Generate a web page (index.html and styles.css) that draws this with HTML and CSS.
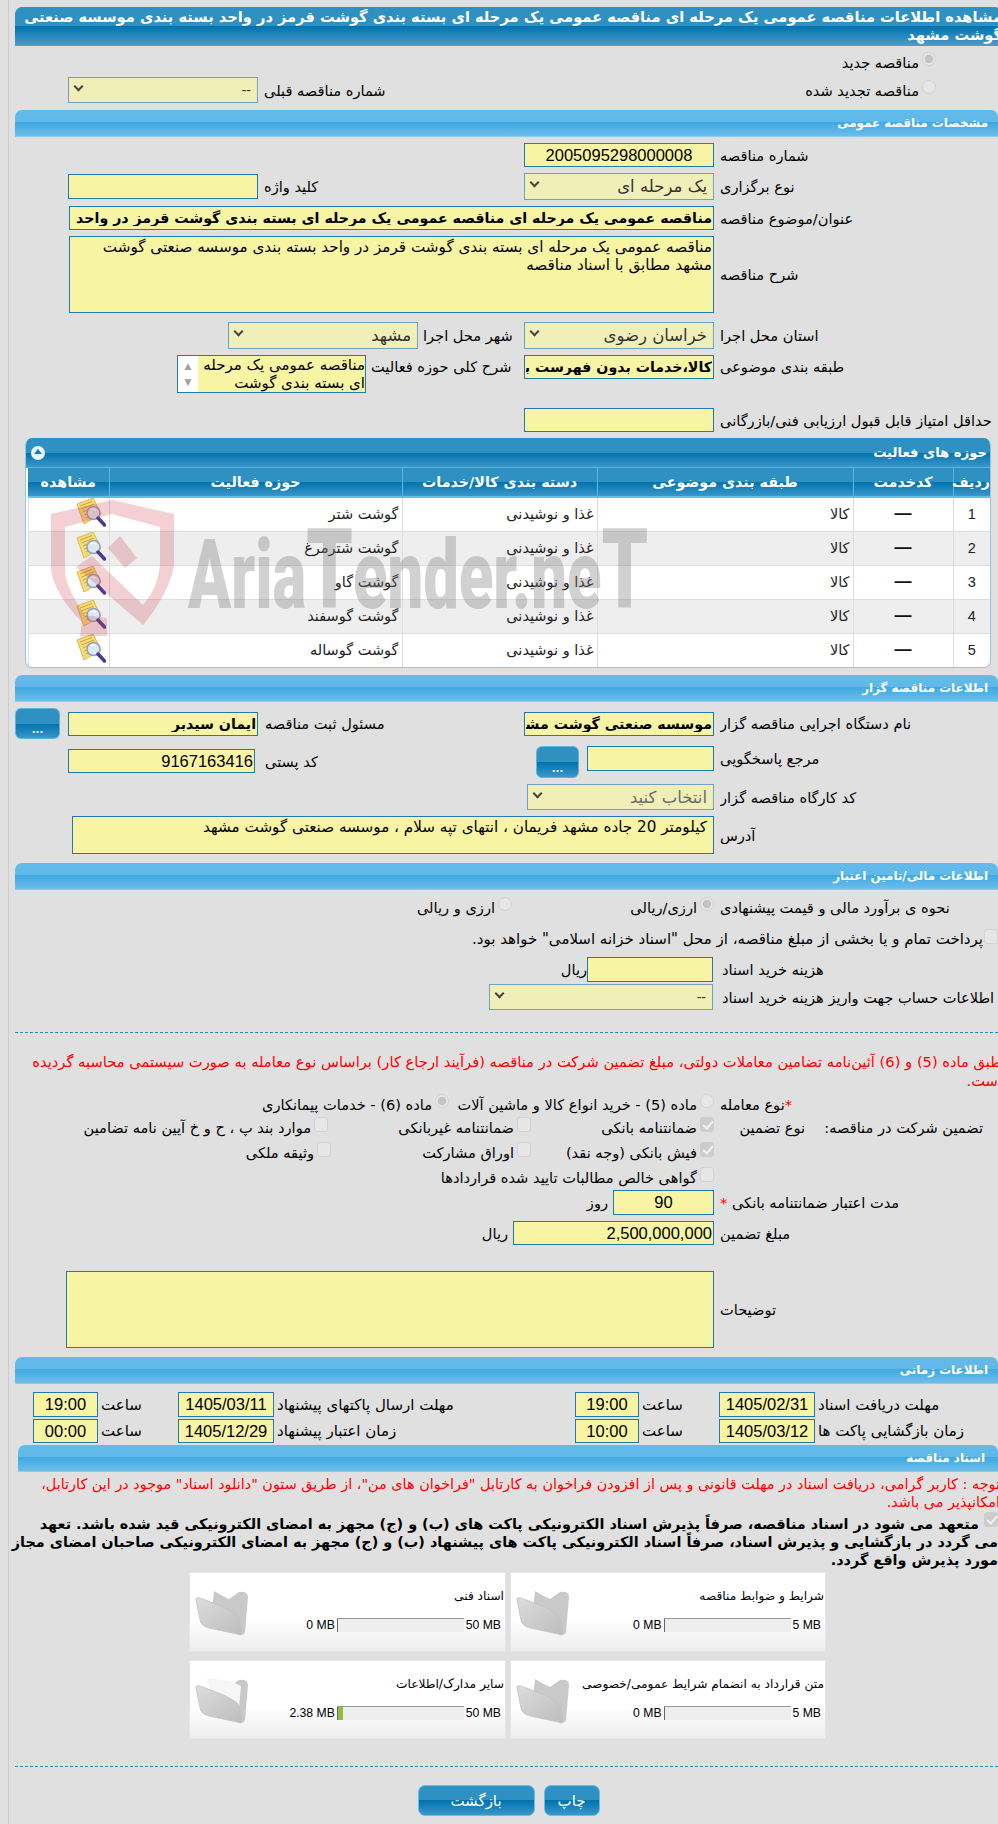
FILE: index.html
```html
<!DOCTYPE html>
<html lang="fa">
<head>
<meta charset="utf-8">
<title>مشاهده اطلاعات مناقصه</title>
<link rel="stylesheet" href="styles.css">
</head>
<body>
<svg class="defs" width="0" height="0" aria-hidden="true">
  <defs>
    <linearGradient id="fg" x1="0" y1="0" x2="1" y2="1"><stop offset="0" stop-color="#dcdcdc"/><stop offset="1" stop-color="#bdbdbd"/></linearGradient>
    <symbol id="note" viewBox="0 0 30 30">
      <path d="M1 6 L17 0 L25 16 L8 26 Z" fill="#f4dc78" stroke="#d8b850" stroke-width="1"/>
      <path d="M4 8 L16 3.500 M5.500 11 L18 6 M7 14 L19 9 M8.500 17 L14 14.500 M10 20 L14 18" stroke="#c9a63c" stroke-width="1" fill="none"/>
      <circle cx="17.500" cy="15" r="6.500" fill="#dce8f4" stroke="#9aa0b8" stroke-width="1.500"/>
      <path d="M15 12 Q17 10.500 20 12" stroke="#fff" stroke-width="1.500" fill="none"/>
      <path d="M22 20 L28.500 27" stroke="#4d3a94" stroke-width="3.500" stroke-linecap="round"/>
    </symbol>
    <symbol id="folder" viewBox="0 0 54 46">
      <path d="M19 1 Q27 6 34 9 L44 2 Q53 1 53 7 L50 42 Q49 46 44 44 L16 30 Z" fill="#c9c9c9"/>
      <path d="M1 10 Q0 7 5 8 L21 14 Q25 16 29 17 L41 24 Q44 26 45 32 L47 44 Q46 46 42 44 L14 38 Q6 36 5 30 Z" fill="url(#fg)" stroke="#c2c2c2" stroke-width=".8"/>
    </symbol>
    <symbol id="folder-full" viewBox="0 0 54 46">
      <path d="M19 1 Q27 6 34 9 L44 2 Q53 1 53 7 L50 42 Q49 46 44 44 L16 30 Z" fill="#c9c9c9"/>
      <path d="M12 0 L36 3 L46 8 L44 30 L20 24 Z" fill="#f6f6f6"/>
      <path d="M1 10 Q0 7 5 8 L21 14 Q25 16 29 17 L41 24 Q44 26 45 32 L47 44 Q46 46 42 44 L14 38 Q6 36 5 30 Z" fill="url(#fg)" stroke="#c2c2c2" stroke-width=".8"/>
    </symbol>
  </defs>
</svg>

<div class="shell">
<main class="main" dir="rtl">

  <h1 class="head">مشاهده اطلاعات مناقصه عمومی یک مرحله ای مناقصه عمومی یک مرحله ای بسته بندی گوشت قرمز در واحد بسته بندی موسسه صنعتی گوشت مشهد</h1>

  <div class="radio-row rr-1"><input class="rd" type="radio" disabled checked><span>مناقصه جدید</span></div>
  <div class="row rr-2">
    <div class="radio-inline"><input class="rd" type="radio" disabled><span>مناقصه تجدید شده</span></div>
    <div class="aside">
      <span>شماره مناقصه قبلی</span>
      <div class="sel w190 h26"><select disabled class="dash-val"><option>--</option></select></div>
    </div>
  </div>

  <h2 class="bar mt-7">مشخصات مناقصه عمومی</h2>

  <div class="row mt-6">
    <label class="lab">شماره مناقصه</label>
    <input class="fld num w190 center" readonly value="2005095298000008">
  </div>
  <div class="row mt-6">
    <label class="lab">نوع برگزاری</label>
    <div class="sel w190 h27"><select disabled><option>یک مرحله ای</option></select></div>
    <div class="aside">
      <span>کلید واژه</span>
      <input class="fld w190 h25" readonly value="">
    </div>
  </div>
  <div class="row mt-6">
    <label class="lab">عنوان/موضوع مناقصه</label>
    <input class="fld bold w645" readonly value="مناقصه عمومی یک مرحله ای مناقصه عمومی یک مرحله ای بسته بندی گوشت قرمز در واحد بسته بندی موسسه صنعتی گوشت مشهد">
  </div>
  <div class="row mt-6">
    <label class="lab">شرح مناقصه</label>
    <textarea class="area w645 h77" readonly>مناقصه عمومی یک مرحله ای بسته بندی گوشت قرمز در واحد بسته بندی موسسه صنعتی گوشت مشهد مطابق با اسناد مناقصه</textarea>
  </div>
  <div class="row mt-9">
    <label class="lab">استان محل اجرا</label>
    <div class="sel w190 h27"><select disabled><option>خراسان رضوی</option></select></div>
    <div class="near">
      <span class="near-lab nl-101">شهر محل اجرا</span>
      <div class="sel w190 h27"><select disabled><option>مشهد</option></select></div>
    </div>
  </div>
  <div class="row row-top mt-6">
    <label class="lab lh24">طبقه بندی موضوعی</label>
    <input class="fld bold w190" readonly value="کالا،خدمات بدون فهرست بها">
    <div class="near">
      <span class="near-lab nl-153 lh24">شرح کلی حوزه فعالیت</span>
      <div class="listbox">
        <div class="list-text">مناقصه عمومی یک مرحله ای بسته بندی گوشت</div>
        <div class="list-bar"><span>▲</span><span>▼</span></div>
      </div>
    </div>
  </div>
  <div class="row mt-15">
    <label class="lab">حداقل امتیاز قابل قبول ارزیابی فنی/بازرگانی</label>
    <input class="fld w190 shift-4" readonly value="">
  </div>

  <section class="panel">
    <div class="panel-title"><span>حوزه های فعالیت</span><span class="collapse"></span></div>
    <div class="panel-body">
      <table class="grid">
        <colgroup><col class="c1"><col class="c2"><col class="c3"><col class="c4"><col class="c5"><col class="c6"></colgroup>
        <thead>
          <tr><th>ردیف</th><th>کدخدمت</th><th>طبقه بندی موضوعی</th><th>دسته بندی کالا/خدمات</th><th>حوزه فعالیت</th><th>مشاهده</th></tr>
        </thead>
        <tbody>
          <tr><td class="ctr">1</td><td class="ctr dash">—</td><td>کالا</td><td>غذا و نوشیدنی</td><td>گوشت شتر</td><td class="ico"><svg class="note"><use href="#note"/></svg></td></tr>
          <tr><td class="ctr">2</td><td class="ctr dash">—</td><td>کالا</td><td>غذا و نوشیدنی</td><td>گوشت شترمرغ</td><td class="ico"><svg class="note"><use href="#note"/></svg></td></tr>
          <tr><td class="ctr">3</td><td class="ctr dash">—</td><td>کالا</td><td>غذا و نوشیدنی</td><td>گوشت گاو</td><td class="ico"><svg class="note"><use href="#note"/></svg></td></tr>
          <tr><td class="ctr">4</td><td class="ctr dash">—</td><td>کالا</td><td>غذا و نوشیدنی</td><td>گوشت گوسفند</td><td class="ico"><svg class="note"><use href="#note"/></svg></td></tr>
          <tr><td class="ctr">5</td><td class="ctr dash">—</td><td>کالا</td><td>غذا و نوشیدنی</td><td>گوشت گوساله</td><td class="ico"><svg class="note"><use href="#note"/></svg></td></tr>
        </tbody>
      </table>
    </div>
  </section>

  <h2 class="bar mt-7">اطلاعات مناقصه گزار</h2>

  <div class="row mt-6">
    <label class="lab">نام دستگاه اجرایی مناقصه گزار</label>
    <input class="fld bold w190" readonly value="موسسه صنعتی گوشت مشهد">
    <div class="aside edge">
      <span>مسئول ثبت مناقصه</span>
      <input class="fld bold w190" readonly value="ایمان سیدبر">
      <button class="dots" type="button">...</button>
    </div>
  </div>
  <div class="row row-top mt-7">
    <label class="lab lh25">مرجع پاسخگویی</label>
    <input class="fld w127 h25" readonly value="">
    <button class="dots dots-gap" type="button">...</button>
    <div class="aside drop-3">
      <span>کد پستی</span>
      <input class="fld num w187" readonly value="9167163416">
    </div>
  </div>
  <div class="row mt-6">
    <label class="lab">کد کارگاه مناقصه گزار</label>
    <div class="sel w187 h26"><select disabled class="muted"><option>انتخاب کنید</option></select></div>
  </div>
  <div class="row mt-6">
    <label class="lab">آدرس</label>
    <textarea class="area w642 h38 pad-r6" readonly>کیلومتر 20 جاده مشهد فریمان ، انتهای تپه سلام ، موسسه صنعتی گوشت مشهد</textarea>
  </div>

  <h2 class="bar mt-9">اطلاعات مالی/تامین اعتبار</h2>

  <div class="row opt-row mt-6">
    <label class="lab">نحوه ی برآورد مالی و قیمت پیشنهادی</label>
    <div class="radio-inline w202"><input class="rd" type="radio" disabled checked><span>ارزی/ریالی</span></div>
    <div class="radio-inline"><input class="rd" type="radio" disabled><span>ارزی و ریالی</span></div>
  </div>
  <div class="row opt-row mt-10 treasury">
    <input class="cb" type="checkbox" disabled><span>پرداخت تمام و یا بخشی از مبلغ مناقصه، از محل "اسناد خزانه اسلامی" خواهد بود.</span>
  </div>
  <div class="row mt-7">
    <label class="lab lab-w">هزینه خرید اسناد</label>
    <input class="fld w126 h25" readonly value="">
    <span class="tail-0">ریال</span>
  </div>
  <div class="row mt-2">
    <label class="lab lab-w">اطلاعات حساب جهت واریز هزینه خرید اسناد</label>
    <div class="sel w224 h26"><select disabled class="dash-val"><option>--</option></select></div>
  </div>

  <hr class="dotted mt-22">

  <p class="warn">طبق ماده (5) و (6) آئین‌نامه تضامین معاملات دولتی، مبلغ تضمین شرکت در مناقصه (فرآیند ارجاع کار) براساس نوع معامله به صورت سیستمی محاسبه گردیده است.</p>

  <div class="row opt-row mt-1">
    <label class="lab"><span class="star">*</span>نوع معامله</label>
    <div class="radio-inline w266"><input class="rd" type="radio" disabled><span>ماده (5) - خرید انواع کالا و ماشین آلات</span></div>
    <div class="radio-inline"><input class="rd" type="radio" disabled checked><span>ماده (6) - خدمات پیمانکاری</span></div>
  </div>

  <div class="row g-row">
    <span class="g-a">تضمین شرکت در مناقصه:</span><span class="g-b">نوع تضمین</span>
    <div class="radio-inline w183"><input class="cb" type="checkbox" disabled checked><span>ضمانتنامه بانکی</span></div>
    <div class="radio-inline w203"><input class="cb" type="checkbox" disabled><span>ضمانتنامه غیربانکی</span></div>
    <div class="radio-inline"><input class="cb" type="checkbox" disabled><span>موارد بند پ ، ح و خ آیین نامه تضامین</span></div>
  </div>
  <div class="row g-row">
    <span class="g-blank"></span>
    <div class="radio-inline w183"><input class="cb" type="checkbox" disabled checked><span>فیش بانکی (وجه نقد)</span></div>
    <div class="radio-inline w200"><input class="cb" type="checkbox" disabled><span>اوراق مشارکت</span></div>
    <div class="radio-inline"><input class="cb" type="checkbox" disabled><span>وثیقه ملکی</span></div>
  </div>
  <div class="row g-row">
    <span class="g-blank"></span>
    <div class="radio-inline"><input class="cb" type="checkbox" disabled><span>گواهی خالص مطالبات تایید شده قراردادها</span></div>
  </div>

  <div class="row">
    <label class="lab">مدت اعتبار ضمانتنامه بانکی <span class="star">*</span></label>
    <input class="fld num center w101 h25" readonly value="90">
    <span class="tail">روز</span>
  </div>
  <div class="row mt-6">
    <label class="lab">مبلغ تضمین</label>
    <input class="fld num w201" readonly value="2,500,000,000">
    <span class="tail">ریال</span>
  </div>
  <div class="row mt-26">
    <label class="lab">توضیحات</label>
    <textarea class="area w648 h77" readonly></textarea>
  </div>

  <h2 class="bar mt-9">اطلاعات زمانی</h2>

  <div class="times">
    <span class="t-lab">مهلت دریافت اسناد</span><input class="fld num center h25" readonly value="1405/02/31"><span class="t-hour">ساعت</span><input class="fld num center h25" readonly value="19:00">
    <span class="t-lab">مهلت ارسال پاکتهای پیشنهاد</span><input class="fld num center h25" readonly value="1405/03/11"><span class="t-hour">ساعت</span><input class="fld num center h25" readonly value="19:00">
    <span class="t-lab">زمان بازگشایی پاکت ها</span><input class="fld num center" readonly value="1405/03/12"><span class="t-hour">ساعت</span><input class="fld num center" readonly value="10:00">
    <span class="t-lab">زمان اعتبار پیشنهاد</span><input class="fld num center" readonly value="1405/12/29"><span class="t-hour">ساعت</span><input class="fld num center" readonly value="00:00">
  </div>

  <h2 class="bar bar-docs mt-2">اسناد مناقصه</h2>

  <p class="notice">توجه : کاربر گرامی، دریافت اسناد در مهلت قانونی و پس از افزودن فراخوان به کارتابل "فراخوان های من"، از طریق ستون "دانلود اسناد" موجود در این کارتابل، امکانپذیر می باشد.</p>

  <p class="pledge"><input class="cb cb-pledge" type="checkbox" disabled checked>متعهد می شود در اسناد مناقصه، صرفاً پذیرش اسناد الکترونیکی پاکت های (ب) و (ج) مجهز به امضای الکترونیکی قید شده باشد. تعهد<br>می گردد در بازگشایی و پذیرش اسناد، صرفاً اسناد الکترونیکی پاکت های پیشنهاد (ب) و (ج) مجهز به امضای الکترونیکی صاحبان امضای مجاز<br>مورد پذیرش واقع گردد.</p>

  <div class="docs">
    <article class="card">
      <div class="card-info">
        <div class="card-title">شرایط و ضوابط مناقصه</div>
        <div class="meter"><span class="mb">5 MB</span><div class="track"></div><span class="mb">0 MB</span></div>
      </div>
      <svg class="folder"><use href="#folder"/></svg>
    </article>
    <article class="card">
      <div class="card-info">
        <div class="card-title">اسناد فنی</div>
        <div class="meter"><span class="mb">50 MB</span><div class="track"></div><span class="mb">0 MB</span></div>
      </div>
      <svg class="folder"><use href="#folder"/></svg>
    </article>
    <article class="card">
      <div class="card-info">
        <div class="card-title">متن قرارداد به انضمام شرایط عمومی/خصوصی</div>
        <div class="meter"><span class="mb">5 MB</span><div class="track"></div><span class="mb">0 MB</span></div>
      </div>
      <svg class="folder"><use href="#folder"/></svg>
    </article>
    <article class="card">
      <div class="card-info">
        <div class="card-title">سایر مدارک/اطلاعات</div>
        <div class="meter"><span class="mb">50 MB</span><div class="track"><div class="fill" style="width:5%"></div></div><span class="mb">2.38 MB</span></div>
      </div>
      <svg class="folder"><use href="#folder-full"/></svg>
    </article>
  </div>

  <hr class="dotted mt-27">

  <div class="actions">
    <button class="act act-print" type="button">چاپ</button>
    <button class="act act-back" type="button">بازگشت</button>
  </div>
</main>
</div>

<div class="watermark" aria-hidden="true">
  <svg class="shield" viewBox="0 0 130 140">
    <path d="M62 0 L124 14 L124 65 Q120 92 93 125 L26 67 L42 56 L93 105 Q110 85 110 60 L110 27 L62 14 L15 27 L15 75 Q20 95 35 115 L57 118 L57 136 L30 136 L32 122 Q5 95 1 70 L1 14 Z" fill="#c83c46" fill-opacity=".24"/>
    <path d="M58 48 L70 36 L87 58 L75 68 Z" fill="#c83c46" fill-opacity=".24"/>
  </svg>
  <span class="wm-text">Aria<span class="wm-t">T</span>ender.ne<span class="wm-t">T</span></span>
</div>
</body>
</html>
```
FILE: styles.css
```css
* { box-sizing: border-box; }
html, body { margin: 0; padding: 0; height: 1824px; overflow: hidden; }
body {
  background: #e0e0e0;
  color: #000;
  font-family: "DejaVu Sans", "Liberation Sans", sans-serif;
  font-size: 14.600px;
  position: relative;
}
.defs { position: absolute; }
.shell { margin-left: 8px; border-left: 1px solid #ccc; padding-left: 6px; width: 1002px; height: 1824px; padding-top: 7px; }
.main { width: 987px; }

.head {
  margin: 0;
  height: 39px;
  font-size: 14.650px;
  font-weight: bold;
  line-height: 18px;
  color: #fff;
  padding: 1px 0 0 5px;
  border-radius: 7px 7px 0 0;
  background: linear-gradient(#2f90c2 0, #2f90c2 50%, #0072ae 50%, #4a9bc9 100%);
  border-bottom: 1px solid #4a9fd2;
  overflow: hidden;
}
.bar {
  margin: 0 0 0 0;
  margin-right: 4px;
  height: 27px;
  line-height: 27px;
  font-size: 11.900px;
  font-weight: bold;
  color: #fff;
  padding-right: 10px;
  border-radius: 7px 7px 0 0;
  background: linear-gradient(#63bbea 0, #5fb8e9 48%, #3ea9e3 48%, #6dbde9 100%);
  border-bottom: 1px solid #8ccdee;
}
.bar-docs { margin-left: 3px; padding-right: 13px; }

.mt-1 { margin-top: 1px; } .mt-2 { margin-top: 2px; } .mt-6 { margin-top: 6px; } .mt-7 { margin-top: 7px; }
.mt-9 { margin-top: 9px; } .mt-10 { margin-top: 10px; } .mt-15 { margin-top: 15px; } .mt-19 { margin-top: 19px; }
.mt-22 { margin-top: 22px; } .mt-26 { margin-top: 26px; } .mt-27 { margin-top: 27px; }

.row { display: flex; align-items: center; white-space: nowrap; }
.row-top { align-items: flex-start; }
.lab { flex: none; width: 282px; margin-left: 6px; text-align: left; white-space: nowrap; overflow: hidden; }
.lab-w { width: 280px; margin-left: 9px; }
.lh24 { line-height: 24px; }
.lh25 { line-height: 25px; }
.aside { margin-right: auto; margin-left: 53px; display: flex; align-items: center; gap: 6px; }
.aside.edge { margin-left: 0; gap: 7px; }
.aside.edge .dots { margin-right: 1px; }
.drop-3 { margin-top: 3px; gap: 10px; }
.near { display: flex; align-items: center; gap: 5px; }
.row-top .near { align-items: flex-start; }
.near-lab { flex: none; text-align: left; }
.nl-101 { width: 101px; }
.nl-153 { width: 153px; }
.shift-4 { margin-right: 4px; }

.radio-row { display: flex; align-items: center; padding-right: 66px; }
.rr-1 { margin-top: 5px; height: 22px; }
.rr-2 { margin-top: 4px; height: 26px; padding-right: 66px; }
.radio-inline { display: flex; align-items: center; flex: none; }
.radio-row span, .radio-inline span { margin-right: 3px; }
.w183 { width: 183px; } .w200 { width: 200px; } .w202 { width: 202px; } .w203 { width: 203px; } .w266 { width: 265px; }

.rd, .cb {
  appearance: none;
  -webkit-appearance: none;
  flex: none;
  margin: -6px 0 0 0;
  width: 14px;
  height: 14px;
  background: #e6e6e6;
  border: 1px solid #d2d2d2;
  position: relative;
}
.rd { border-radius: 50%; }
.rd:checked { background: radial-gradient(circle, #c3c3c3 0, #c3c3c3 4px, #e6e6e6 4.500px); }
.cb { border-radius: 3px; height: 15px; }
.cb:checked { background: #cdcdcd; border-color: #cdcdcd; }
.cb:checked::after {
  content: "";
  position: absolute;
  left: 4px; top: 1px;
  width: 4px; height: 8px;
  border: solid #f2f2f2;
  border-width: 0 2px 2px 0;
  transform: rotate(40deg);
}

.fld {
  flex: none;
  display: block;
  height: 24px;
  margin: 0;
  padding: 0 1px;
  border: 1px solid #1f7ab2;
  background: #f7f4a4;
  color: #000;
  font: inherit;
  font-size: 14px;
  text-align: right;
  outline: none;
}
.num { font-family: "Liberation Sans", sans-serif; font-size: 16.500px; }
.bold { font-weight: bold; font-size: 14.200px; }
.center { text-align: center; }
.w101 { width: 101px; } .w126 { width: 126px; } .w127 { width: 127px; } .w187 { width: 187px; } .w190 { width: 190px; }
.w201 { width: 201px; } .w224 { width: 224px; } .w642 { width: 642px; } .w645 { width: 645px; } .w648 { width: 648px; }
.h25 { height: 25px; } .h26 { height: 26px; } .h27 { height: 27px; } .h38 { height: 38px; } .h77 { height: 77px; }

.area {
  flex: none;
  display: block;
  margin: 0;
  padding: 1px 1px 0 1px;
  border: 1px solid #1f7ab2;
  background: #f7f4a4;
  font: inherit;
  font-size: 15.200px;
  line-height: 18px;
  resize: none;
  overflow: hidden;
  color: #000;
  outline: none;
}
.pad-r6 { padding-right: 6px; }

.sel { flex: none; position: relative; }
.sel select {
  appearance: none;
  -webkit-appearance: none;
  display: block;
  width: 100%;
  height: 100%;
  margin: 0;
  padding: 0 6px 0 20px;
  border: 1px solid #6ea3c6;
  border-radius: 0;
  background: #f1efb8;
  color: #333;
  opacity: 1;
  font: inherit;
  font-size: 16.500px;
  text-align: right;
}
.sel select.muted { color: #6b6b6b; }
.sel select.dash-val { font-family: "Liberation Sans", sans-serif; font-size: 14px; }
.sel::after {
  content: "";
  position: absolute;
  left: 7px;
  top: 6px;
  width: 5px;
  height: 5px;
  border: solid #444;
  border-width: 0 2px 2px 0;
  transform: rotate(45deg);
}

.listbox { display: flex; flex: none; width: 189px; height: 38px; border: 1px solid #1f7ab2; background: #f7f4a4; overflow: hidden; }
.list-text { flex: 1; font-size: 15px; line-height: 18px; white-space: normal; padding: 0; overflow: hidden; }
.list-bar { width: 20px; flex: none; background: #fff; display: flex; flex-direction: column; justify-content: space-between; align-items: center; color: #a0a0a0; font-size: 9px; line-height: 16px; padding: 2px 0; }

.panel { margin: 6px 11px 0 10px; width: 966px; border: 1px solid #8fc7e6; border-top: 0; border-radius: 7px; overflow: hidden; background: #fff; }
.panel-title {
  height: 30px;
  display: flex;
  justify-content: space-between;
  align-items: center;
  padding: 0 3px 0 5px;
  color: #fff;
  font-size: 13.200px;
  font-weight: bold;
  background: linear-gradient(#2f90c2 0, #2f90c2 50%, #0072ae 50%, #3b97c9 100%);
  border-bottom: 1px solid #5cb4e2;
}
.collapse { width: 14px; height: 14px; border-radius: 50%; background: #e8f4fb; position: relative; }
.collapse::after { content: ""; position: absolute; left: 3px; top: 3px; border: 4px solid transparent; border-top: 0; border-bottom: 5px solid #1f7ab2; }
.panel-body { padding-right: 0; padding-left: 2px; }
.grid { width: 962px; table-layout: fixed; border-collapse: collapse; font-size: 14.500px; color: #222; }
.c1 { width: 37px; } .c2 { width: 100px; } .c3 { width: 256px; } .c4 { width: 195px; } .c5 { width: 293px; } .c6 { width: 81px; }
.grid th {
  height: 29px;
  padding: 0;
  color: #fff;
  font-size: 14.300px;
  font-weight: bold;
  text-align: center;
  white-space: nowrap;
  background: linear-gradient(#2f90c2 0, #2f90c2 50%, #0072ae 50%, #3b97c9 100%);
  border-left: 1px solid #5cb4e2;
  border-bottom: 2px solid #5cc0ee;
}
.grid th:last-child { border-left: 0; }
.grid td { height: 34px; padding: 0 3px; text-align: right; border-left: 1px solid #ddd; border-bottom: 1px solid #ddd; vertical-align: middle; }
.grid tr:nth-child(even) td { background: #eee; }
.grid tr:last-child td { border-bottom: 0; }
.grid td.ctr { text-align: center; font-family: "Liberation Sans", sans-serif; }
.grid td.dash { font-weight: bold; font-size: 17px; color: #111; }
.grid td.ico { padding: 0; }
.note { display: block; width: 30px; height: 30px; margin: 0 auto 2px; transform: translateX(22px); }

.dots {
  flex: none;
  width: 45px;
  height: 31px;
  margin: 0;
  padding: 12px 0 0;
  font: inherit;
  font-size: 10px;
  font-weight: bold;
  color: #fff;
  border: 1px solid #5cb4e2;
  border-radius: 6px;
  background: linear-gradient(#2f90c2 0, #2f90c2 50%, #0072ae 50%, #3b97c9 100%);
}
.dots-gap { margin-right: 8px; width: 43px; height: 32px; }

.opt-row { height: 22px; }
.treasury { padding-right: 4px; font-size: 15px; }
.treasury span { margin-right: 1px; }
.tail { margin-right: 5px; }
.tail-0 { margin-right: 0; }

.dotted { margin: 0 0 0 0; margin-right: 4px; height: 0; border: 0; border-top: 1px dashed #2a8ab8; }
.dotted.mt-22 { margin-top: 22px; }
.dotted.mt-27 { margin-top: 27px; }

.warn { margin: 19px 0 0; color: #f00; line-height: 19px; font-size: 14.700px; padding-left: 9px; height: 40px; }
.star { color: #f00; }
.g-row { height: 25px; }
.g-a { flex: none; width: 197px; padding-right: 19px; }
.g-b { flex: none; width: 91px; }
.g-blank { flex: none; width: 288px; }

.times {
  margin-top: 8px;
  display: grid;
  grid-template-columns: 187px 96px 80px 64px 301px 96px 80px 65px;
  grid-template-rows: 25px 24px;
  row-gap: 2px;
  align-items: center;
  white-space: nowrap;
}
.times .fld { width: 100%; }
.t-lab, .t-hour { text-align: left; padding-left: 3px; font-size: 15px; }

.notice { margin: 3px 0 0; color: #f00; font-size: 14.400px; line-height: 18px; padding: 0 2px 0 20px; }
.pledge { margin: 4px 0 0; padding: 0 4px 0 0; font-size: 14.400px; font-weight: bold; line-height: 18px; white-space: nowrap; }
.cb-pledge { display: inline-block; margin: -3px 0 0 5px; vertical-align: top; }

.docs { margin: 3px 176px 0 0; width: 637px; display: grid; grid-template-columns: 316px 317px; grid-template-rows: 80px 79px; gap: 8px 4px; }
.card {
  display: flex;
  background: linear-gradient(#fff 0, #fff 60%, #ececec 100%);
  border: 1px solid #e6e6e6;
}
.card-info { flex: 1; min-width: 0; padding-right: 1px; }
.card-title { font-size: 12.200px; line-height: 16px; margin-top: 15px; white-space: nowrap; }
.meter { margin-top: 14px; display: flex; align-items: center; gap: 2px; padding-right: 3px; white-space: nowrap; }
.mb { direction: ltr; unicode-bidi: isolate; font-family: "Liberation Sans", sans-serif; font-size: 12.200px; }
.track { flex: none; width: 127px; height: 14px; background: #eee; border-top: 1px solid #999; position: relative; }
.track::after { content: ""; position: absolute; left: 0; top: 0; bottom: 0; width: 1px; background: #666; }
.fill { position: absolute; left: 0; top: 0; bottom: 0; background: #8fbf3f; }
.folder { flex: none; width: 54px; height: 46px; margin: 17px 0 0 5px; }

.actions { margin-top: 18px; display: flex; justify-content: center; gap: 9px; }
.act {
  height: 31px;
  margin: 0;
  font: inherit;
  font-size: 15px;
  color: #fff;
  border: 1px solid #5cc0ee;
  border-radius: 7px;
  background: linear-gradient(#2f90c2 0, #2f90c2 50%, #0072ae 50%, #3b97c9 100%);
}
.act-print { width: 56px; }
.act-back { width: 117px; }

.watermark { position: absolute; left: 50px; top: 500px; width: 610px; height: 140px; pointer-events: none; direction: ltr; }
.shield { position: absolute; left: 0; top: 0; width: 130px; height: 140px; }
.wm-text {
  position: absolute;
  left: 138px;
  top: 22px;
  font-family: Roboto, sans-serif;
  font-weight: 900;
  font-size: 96px;
  line-height: 96px;
  color: rgba(120, 120, 120, .34);
  white-space: nowrap;
  transform-origin: left top;
  transform: scaleX(.66);
}
.wm-t { font-size: 112px; }
```
